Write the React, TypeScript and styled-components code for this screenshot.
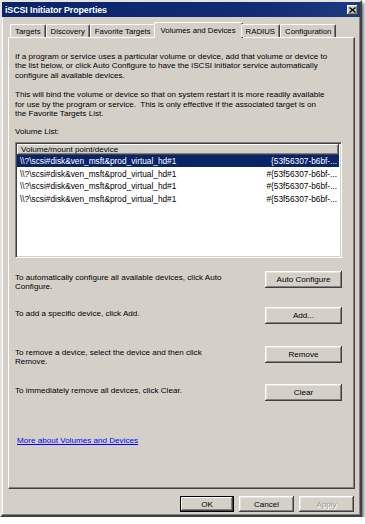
import React from "react";
import styled, { createGlobalStyle } from "styled-components";

const GlobalStyle = createGlobalStyle`
  html, body {
    margin: 0;
    padding: 0;
    background: #ffffff;
  }
  body {
    font-family: "Liberation Sans", Arial, sans-serif;
    font-size: 8.1px;
    color: #000000;
  }
`;

const tabs = [
  "Targets",
  "Discovery",
  "Favorite Targets",
  "Volumes and Devices",
  "RADIUS",
  "Configuration",
];

const volumePath = "\\\\?\\scsi#disk&ven_msft&prod_virtual_hd#1";

const volumes = [
  { path: volumePath, id: "{53f56307-b6bf-...", selected: true },
  { path: volumePath, id: "#{53f56307-b6bf-...", selected: false },
  { path: volumePath, id: "#{53f56307-b6bf-...", selected: false },
  { path: volumePath, id: "#{53f56307-b6bf-...", selected: false },
];

const actions = [
  {
    text: (
      <>
        To automatically configure all available devices, click Auto
        <br />
        Configure.
      </>
    ),
    label: "Auto Configure",
    space: 13,
  },
  { text: <>To add a specific device, click Add.</>, label: "Add...", space: 19 },
  {
    text: (
      <>
        To remove a device, select the device and then click
        <br />
        Remove.
      </>
    ),
    label: "Remove",
    space: 22,
  },
  {
    text: <>To immediately remove all devices, click Clear.</>,
    label: "Clear",
    space: 21,
  },
];

const App = () => {
  return (
    <>
      <GlobalStyle />
      <Window>
        <TitleBar>
          <Title>iSCSI Initiator Properties</Title>
          <CloseButton>
            <svg width="7" height="6" viewBox="0 0 7 6">
              <path d="M0.5 0.5 L6.5 5.5 M6.5 0.5 L0.5 5.5" stroke="#000" strokeWidth="1.4" />
            </svg>
          </CloseButton>
        </TitleBar>
        <Body>
          <TabStrip>
            {tabs.map((t) => (
              <Tab key={t} $active={t === "Volumes and Devices"}>
                {t}
              </Tab>
            ))}
          </TabStrip>
          <Panel>
            <Para>
              If a program or service uses a particular volume or device, add that volume or device to
              <br />
              the list below, or click Auto Configure to have the iSCSI initiator service automatically
              <br />
              configure all available devices.
            </Para>
            <Para $space={10}>
              This will bind the volume or device so that on system restart it is more readily available
              <br />
              for use by the program or service.&nbsp; This is only effective if the associated target is on
              <br />
              the Favorite Targets List.
            </Para>
            <Para $space={9}>Volume List:</Para>
            <ListBox>
              <ListHeader>Volume/mount point/device</ListHeader>
              {volumes.map((v, i) => (
                <ListRow key={i} $selected={v.selected}>
                  <span>{v.path}</span>
                  <span>{v.id}</span>
                </ListRow>
              ))}
            </ListBox>
            {actions.map((a) => (
              <ActionRow key={a.label} $space={a.space}>
                <ActionText>{a.text}</ActionText>
                <Button $width={77} $height={17}>
                  {a.label}
                </Button>
              </ActionRow>
            ))}
            <MoreLink href="#">More about Volumes and Devices</MoreLink>
          </Panel>
          <Footer>
            <Button $width={54} $height={16} $default>
              OK
            </Button>
            <Button $width={55} $height={16}>
              Cancel
            </Button>
            <Button $width={55} $height={16} $disabled>
              Apply
            </Button>
          </Footer>
        </Body>
      </Window>
    </>
  );
};

export default App;

const Window = styled.div`
  width: 362px;
  box-sizing: border-box;
  background: #d4d0c8;
  border: 2px solid;
  border-color: #e6e3dd #404040 #404040 #e6e3dd;
  box-shadow: inset -1px -1px #808080, inset 1px 1px #ffffff,
    2px 3px 3px rgba(0, 0, 0, 0.55);
`;

const TitleBar = styled.div`
  height: 15px;
  display: flex;
  align-items: center;
  justify-content: space-between;
  padding: 0 2px 0 3px;
  background: linear-gradient(90deg, #0a246a 0%, #102c72 70%, #1c3a82 100%);
`;

const Title = styled.div`
  color: #ffffff;
  font-weight: bold;
  font-size: 8.9px;
  letter-spacing: -0.1px;
`;

const CloseButton = styled.div`
  width: 11px;
  height: 10px;
  box-sizing: border-box;
  display: flex;
  align-items: center;
  justify-content: center;
  background: #d4d0c8;
  box-shadow: inset -1px -1px #404040, inset 1px 1px #ffffff,
    inset -2px -2px #808080;
`;

const Body = styled.div`
  padding: 5px 5px 3px 6px;
`;

const TabStrip = styled.div`
  height: 15px;
  display: flex;
  align-items: flex-end;
  padding-left: 2px;
  position: relative;
  z-index: 1;
  font-size: 7.8px;
`;

const Tab = styled.div<{ $active?: boolean }>`
  box-sizing: border-box;
  height: ${(p) => (p.$active ? "16px" : "13px")};
  margin: ${(p) => (p.$active ? "0 -2px -1px -2px" : "0")};
  padding: ${(p) => (p.$active ? "3px 6px 0" : "2px 4px 0")};
  background: #d4d0c8;
  border-top: 1px solid #ffffff;
  border-left: 1px solid #ffffff;
  border-right: 1px solid #404040;
  border-radius: 2px 2px 0 0;
  box-shadow: inset -1px 0 #808080;
  white-space: nowrap;
`;

const Panel = styled.div`
  height: 452px;
  box-sizing: border-box;
  display: flex;
  flex-direction: column;
  padding: 14px 12px 0 6px;
  border: 1px solid;
  border-color: #ffffff #404040 #404040 #ffffff;
  box-shadow: inset -1px -1px #808080;
`;

const Para = styled.div<{ $space?: number }>`
  margin-top: ${(p) => p.$space || 0}px;
  line-height: 9.4px;
  white-space: nowrap;
`;

const ListBox = styled.div`
  margin-top: 5px;
  height: 116px;
  box-sizing: border-box;
  background: #ffffff;
  border: 1px solid;
  border-color: #808080 #ffffff #ffffff #808080;
  box-shadow: inset 1px 1px #404040, inset -1px -1px #d4d0c8;
  padding: 1px 2px 1px 1px;
  font-size: 8.3px;
`;

const ListHeader = styled.div`
  height: 11px;
  box-sizing: border-box;
  padding: 1px 0 0 4px;
  line-height: 9px;
  font-size: 8.1px;
  background: #d4d0c8;
  box-shadow: inset -1px -1px #404040, inset 1px 1px #ffffff,
    inset -2px -2px #808080;
`;

const ListRow = styled.div<{ $selected?: boolean }>`
  height: 12.65px;
  display: flex;
  align-items: center;
  justify-content: space-between;
  padding: 0 2px 0 3px;
  white-space: nowrap;
  background: ${(p) => (p.$selected ? "#0a246a" : "transparent")};
  color: ${(p) => (p.$selected ? "#ffffff" : "#000000")};
`;

const ActionRow = styled.div<{ $space: number }>`
  margin-top: ${(p) => p.$space}px;
  height: 17px;
  display: flex;
  align-items: flex-start;
  justify-content: space-between;
`;

const ActionText = styled.div`
  padding-top: 2px;
  line-height: 9.4px;
  white-space: nowrap;
`;

const Button = styled.div<{
  $width: number;
  $height: number;
  $default?: boolean;
  $disabled?: boolean;
}>`
  width: ${(p) => p.$width}px;
  height: ${(p) => p.$height}px;
  box-sizing: border-box;
  flex-shrink: 0;
  display: flex;
  align-items: center;
  justify-content: center;
  background: #d4d0c8;
  color: ${(p) => (p.$disabled ? "#9a978f" : "#000000")};
  text-shadow: ${(p) => (p.$disabled ? "1px 1px #ffffff" : "none")};
  border: ${(p) => (p.$default ? "1px solid #000000" : "none")};
  box-shadow: ${(p) =>
    p.$default
      ? "inset -1px -1px #404040, inset 1px 1px #ffffff, inset -2px -2px #808080"
      : "inset -1px -1px #404040, inset 1px 1px #ffffff, inset -2px -2px #808080, inset 2px 2px #e6e3dd"};
`;

const MoreLink = styled.a`
  margin-top: 35px;
  margin-left: 2px;
  align-self: flex-start;
  color: #0000ff;
  text-decoration: underline;
  line-height: 9.4px;
`;

const Footer = styled.div`
  margin-top: 7px;
  display: flex;
  justify-content: flex-end;
  gap: 5px;
  padding-right: 1px;
`;
